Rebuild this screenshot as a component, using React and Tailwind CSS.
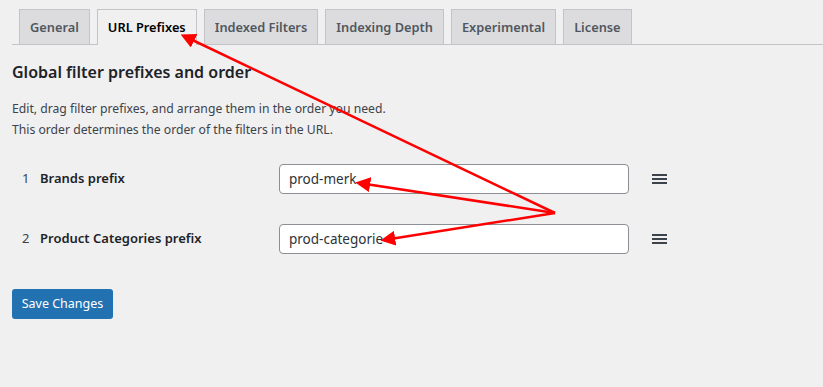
import { useState } from "react";

const tabs = ["General", "URL Prefixes", "Indexed Filters", "Indexing Depth", "Experimental", "License"];

function Handle() {
  return (
    <svg width="15" height="10" viewBox="0 0 15 10" className="text-[#3c434a]">
      <rect x="0" y="0" width="15" height="2" fill="currentColor" />
      <rect x="0" y="4" width="15" height="2" fill="currentColor" />
      <rect x="0" y="8" width="15" height="2" fill="currentColor" />
    </svg>
  );
}

function Arrows() {
  // red annotation arrows drawn over the screenshot
  const from = [555, 213];
  const tips = [
    [184, 36],
    [359, 183],
    [384, 240],
  ];
  return (
    <svg className="absolute inset-0 pointer-events-none" width="823" height="387">
      <defs>
        <marker id="head" markerWidth="6" markerHeight="6" refX="4.5" refY="3" orient="auto" markerUnits="strokeWidth">
          <path d="M0,0 L6,3 L0,6 Z" fill="#f00" />
        </marker>
      </defs>
      {tips.map(([x, y], i) => (
        <line key={i} x1={from[0]} y1={from[1]} x2={x} y2={y} stroke="#f00" strokeWidth="2.5" markerEnd="url(#head)" />
      ))}
    </svg>
  );
}

export default function App() {
  const [active, setActive] = useState("URL Prefixes");
  const [rows, setRows] = useState([
    { label: "Brands prefix", value: "prod-merk" },
    { label: "Product Categories prefix", value: "prod-categorie" },
  ]);

  return (
    <div className="relative w-[823px] h-[387px] overflow-hidden bg-[#f0f0f1] text-[#3c434a] font-['Noto_Sans','Open_Sans',sans-serif]">
      <div className="ml-3 pt-[9px] flex items-end border-b border-[#c3c4c7]">
        {tabs.map((t) => (
          <button
            key={t}
            onClick={() => setActive(t)}
            className={
              "ml-[7px] px-[10px] py-[5px] text-[12.8px] leading-6 font-semibold border border-b-0 border-[#c3c4c7] " +
              (active === t
                ? "bg-[#f0f0f1] text-black -mb-px pb-[6px]"
                : "bg-[#dcdcde] text-[#50575e]")
            }
          >
            {t}
          </button>
        ))}
      </div>

      <div className="px-3">
        <h2 className="mt-[15px] text-[16px] leading-[24px] font-semibold text-[#1d2327]">
          Global filter prefixes and order
        </h2>
        <p className="mt-[14px] text-[12.2px] leading-[21px]">
          Edit, drag filter prefixes, and arrange them in the order you need.
          <br />
          This order determines the order of the filters in the URL.
        </p>

        <div className="mt-[24px] flex flex-col gap-[30px]">
          {rows.map((r, i) => (
            <div key={r.label} className="flex items-center h-[30px]">
              <span className="w-[28px] pl-[10px] text-[13px]">{i + 1}</span>
              <span className="w-[239px] text-[13px] font-semibold text-[#1d2327]">{r.label}</span>
              <input
                value={r.value}
                onChange={(e) =>
                  setRows(rows.map((x, j) => (j === i ? { ...x, value: e.target.value } : x)))
                }
                className="w-[350px] h-[30px] px-[9px] bg-white border border-[#8c8f94] rounded-[4px] text-[13.5px] text-[#2c3338] outline-none"
              />
              <span className="ml-[23px] flex items-center">
                <Handle />
              </span>
            </div>
          ))}
        </div>

        <button className="mt-[35px] h-[30px] w-[101px] rounded-[3px] bg-[#2271b1] text-white text-[12.5px]">
          Save Changes
        </button>
      </div>

      <Arrows />
    </div>
  );
}
